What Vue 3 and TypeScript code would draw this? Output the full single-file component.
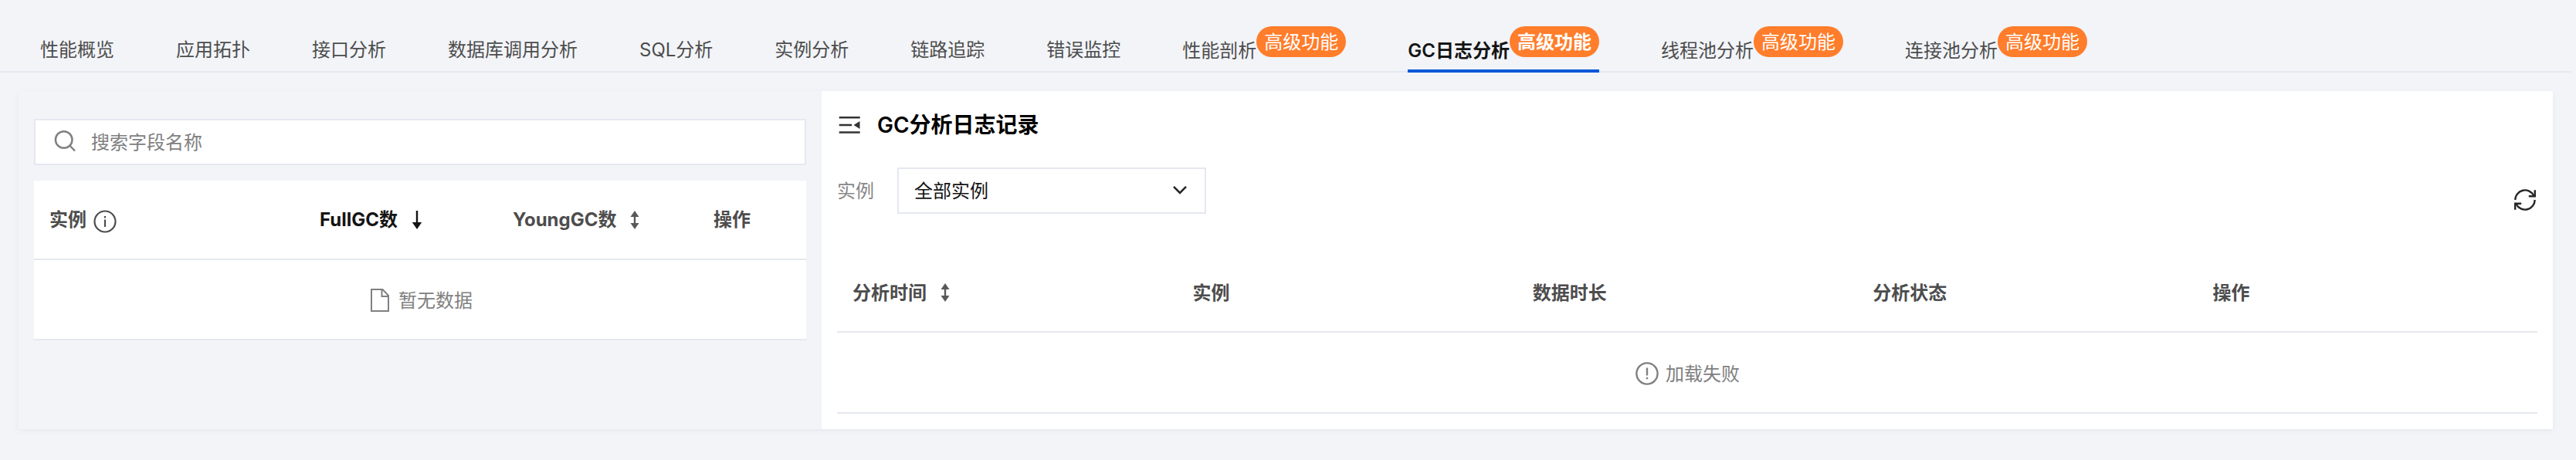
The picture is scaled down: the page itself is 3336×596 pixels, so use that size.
<script setup lang="ts">
interface Tab { label: string; premium?: boolean; active?: boolean }
const tabs: Tab[] = [
  { label: '性能概览' },
  { label: '应用拓扑' },
  { label: '接口分析' },
  { label: '数据库调用分析' },
  { label: 'SQL分析' },
  { label: '实例分析' },
  { label: '链路追踪' },
  { label: '错误监控' },
  { label: '性能剖析', premium: true },
  { label: 'GC日志分析', premium: true, active: true },
  { label: '线程池分析', premium: true },
  { label: '连接池分析', premium: true },
]
const columns: { label: string; sortable?: boolean }[] = [
  { label: '分析时间', sortable: true },
  { label: '实例' },
  { label: '数据时长' },
  { label: '分析状态' },
  { label: '操作' },
]
</script>

<template>
  <div class="page">
    <nav class="tabs">
      <div v-for="tab in tabs" :key="tab.label" class="tab" :class="{ active: tab.active, premium: tab.premium }">
        <span class="tab-label">{{ tab.label }}</span>
        <span v-if="tab.premium" class="badge">高级功能</span>
      </div>
    </nav>

    <main class="card">
      <aside class="side">
        <div class="search">
          <svg width="32" height="32" viewBox="0 0 32 32" fill="none" stroke="#808080" stroke-width="2.5">
            <circle cx="12.7" cy="13" r="10.8" />
            <path d="M20.200 20.500L27 27.500" />
          </svg>
          <span class="search-text">搜索字段名称</span>
        </div>
        <section class="instances">
          <div class="row head">
            <div class="cell">
              实例
              <svg class="info" width="30" height="30" viewBox="0 0 30 30" fill="none" stroke="#4d4d4d" stroke-width="2.2">
                <circle cx="15" cy="15" r="13.5" />
                <path d="M15 12.5v9.5M15 8v2.6" />
              </svg>
            </div>
            <div class="cell sorted">
              FullGC数
              <svg width="14" height="24" viewBox="0 0 14 24">
                <path d="M5.8 0h2.4v15H13.200L7 24 .800 15h5z" fill="#141414" />
              </svg>
            </div>
            <div class="cell">
              YoungGC数
              <svg width="12" height="24" viewBox="0 0 12 24">
                <path d="M6 0l5.500 8H7.200v8h4.300L6 24 .5 16h4.300V8H.5z" fill="#595959" />
              </svg>
            </div>
            <div class="cell">操作</div>
          </div>
          <div class="row empty">
            <svg width="32" height="30" viewBox="0 0 32 30" fill="none" stroke="#808080" stroke-width="2">
              <path d="M5 1h14.500l7.500 8v20H5z" />
              <path d="M18.500 1.500V10H27" />
            </svg>
            <span class="empty-text">暂无数据</span>
          </div>
        </section>
      </aside>

      <section class="content">
        <header class="title">
          <svg width="28" height="24" viewBox="0 0 28 24">
            <path d="M.700 1h27v2.500h-27zM.700 10.700h16.500v2.500H.700zM.700 20.300h27v2.500h-27zM27.500 7v10l-8-5z" fill="#333" />
          </svg>
          <h1>GC分析日志记录</h1>
        </header>
        <div class="filters">
          <span class="filter-label">实例</span>
          <div class="select">
            <span class="select-text">全部实例</span>
            <svg width="20" height="14" viewBox="0 0 20 14" fill="none" stroke="#262626" stroke-width="2.6">
              <path d="M2 1.800l8 8 8-8" />
            </svg>
          </div>
          <svg class="refresh" width="28" height="28" viewBox="0 0 28 28" fill="none" stroke="#262626" stroke-width="2.4">
            <path d="M1.300 14A12.700 12.700 0 0 1 25.300 8.300M26.700 14A12.700 12.700 0 0 1 2.700 19.700" />
            <path d="M26.800 1.300v8H18.800M1.200 26.700v-8h8" />
          </svg>
        </div>
        <div class="log">
          <div class="log-head">
            <div v-for="col in columns" :key="col.label" class="cell">
              <span class="log-label">{{ col.label }}</span>
              <svg v-if="col.sortable" width="12" height="24" viewBox="0 0 12 24">
                <path d="M6 0l5.500 8H7.200v8h4.300L6 24 .5 16h4.300V8H.5z" fill="#595959" />
              </svg>
            </div>
          </div>
          <div class="log-empty">
            <svg width="32" height="30" viewBox="0 0 32 30" fill="none" stroke="#808080" stroke-width="2.400">
              <circle cx="16" cy="15" r="13.600" />
              <path d="M16 7.500v10M16 19.800v2.400" />
            </svg>
            <span class="empty-text">加载失败</span>
          </div>
        </div>
      </section>
    </main>
  </div>
</template>

<style>
body {
  margin: 0;
  background: #f2f4f8;
}
</style>

<style scoped>
.page {
  box-sizing: border-box;
  height: 596px;
  overflow: hidden;
  background: #f2f4f8;
  font: 24px/36px Inter, "Noto Sans CJK SC", sans-serif;
  color: #4d4d4d;
  white-space: nowrap;
}
svg {
  display: block;
  flex: none;
}
.tabs {
  display: flex;
  gap: 80px;
  box-sizing: border-box;
  width: 3330px;
  height: 94px;
  padding-left: 52px;
  border-bottom: 2px solid #e5e8f0;
}
.tab {
  display: flex;
  box-sizing: border-box;
  height: 94px;
  padding-top: 47px;
}
.tab.premium {
  padding-top: 34px;
}
.premium .tab-label {
  padding-top: 14px;
}
.tab.active {
  border-bottom: 4px solid #0058d9;
  color: #141414;
  font-weight: 600;
}
.badge {
  box-sizing: border-box;
  height: 40px;
  padding: 1px 10px 0;
  border-radius: 20px;
  background: #ff7d2b;
  color: #fff;
  line-height: 40px;
}
.card {
  display: flex;
  width: 3282px;
  height: 438px;
  margin: 24px 0 0 24px;
  box-shadow: 0 2px 8px rgba(0, 0, 0, 0.05);
}
.side {
  box-sizing: border-box;
  width: 1040px;
  padding: 36px 20px 0;
}
.search {
  display: flex;
  align-items: center;
  gap: 16px;
  box-sizing: border-box;
  height: 60px;
  padding-left: 24px;
  border: 2px solid #e5e8f0;
  background: #fff;
  color: #808080;
}
.search-text,
.select-text,
.filter-label {
  padding-top: 2px;
}
.instances {
  margin-top: 20px;
  background: #fff;
}
.row {
  box-sizing: border-box;
  border-bottom: 2px solid #e5e8ee;
}
.head {
  display: grid;
  grid-template-columns: 350px 250px 260px 1fr;
  height: 103px;
  padding-left: 20px;
}
.cell {
  display: flex;
  align-items: center;
  gap: 18px;
  font-weight: 700;
}
.info {
  margin: 5px 0 0 -9px;
}
.sorted {
  color: #141414;
}
.empty {
  display: flex;
  align-items: center;
  justify-content: center;
  gap: 8px;
  height: 104px;
  padding-top: 2px;
  color: #808080;
}
.empty-text {
  padding-top: 2px;
}
.content {
  box-sizing: border-box;
  width: 2242px;
  padding: 24px 20px 0;
  background: #fff;
}
.title {
  display: flex;
  align-items: center;
  gap: 22px;
  height: 40px;
  padding-left: 2px;
}
h1 {
  margin: 0;
  color: #000;
  font-size: 28px;
  font-weight: 600;
  line-height: 40px;
}
.filters {
  display: flex;
  align-items: center;
  height: 60px;
  margin-top: 35px;
}
.filter-label {
  width: 78px;
  color: #888;
}
.select {
  display: flex;
  align-items: center;
  justify-content: space-between;
  box-sizing: border-box;
  width: 400px;
  height: 60px;
  padding: 0 22px 0 20px;
  border: 2px solid #e5e8f0;
  color: #141414;
}
.refresh {
  margin: 24px 2px 0 auto;
}
.log {
  margin-top: 50px;
}
.log-head {
  display: grid;
  grid-template-columns: repeat(5, 1fr);
  box-sizing: border-box;
  height: 104px;
  border-bottom: 2px solid #e5e8ee;
}
.log-head .cell {
  padding: 2px 0 0 20px;
}
.log-label {
  padding-top: 2px;
}
.log-empty {
  display: flex;
  align-items: center;
  justify-content: center;
  gap: 8px;
  box-sizing: border-box;
  height: 105px;
  padding-top: 3px;
  border-bottom: 2px solid #e5e8f0;
  color: #808080;
}
</style>
